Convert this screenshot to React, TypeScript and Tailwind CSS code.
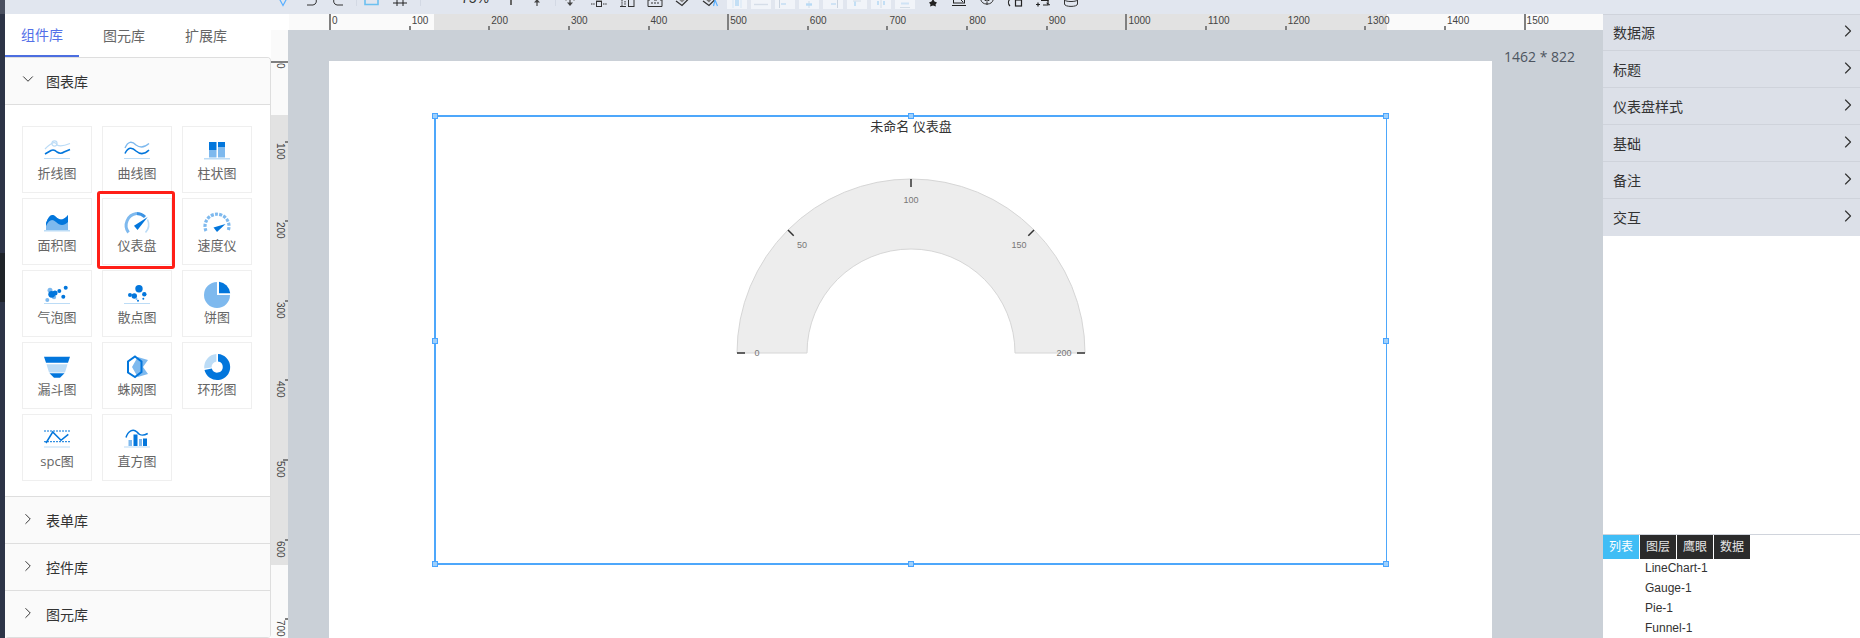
import type { ReactNode } from "react";
import { ChevronDown, ChevronRight } from "lucide-react";

const D = "#0276dc";
const L = "#7eb9ee";
const P = "#bcdcf6";

function Base() {
  return <rect x="2" y="25" width="26" height="1" fill={P} />;
}

function Ico({ children }: { children: ReactNode }) {
  return (
    <svg width="30" height="28" viewBox="0 0 30 28" fill="none" className="overflow-visible shrink-0">
      {children}
    </svg>
  );
}

const charts: { name: string; icon: ReactNode }[] = [
  {
    name: "折线图",
    icon: (
      <Ico>
        <path d="M3 16 C5 14 7 12 9 11 C11 9 14 9 15 12 C18 14 22 13 28 10.5" stroke={P} strokeWidth="1.3" />
        <circle cx="12.5" cy="10.5" r="2.6" stroke={P} strokeWidth="1.1" />
        <path d="M3 21 L9 17.5 C11 16.5 13 17 15 19 C18 21 20 20.5 22 19 L28 16.5" stroke={D} strokeWidth="1.6" />
        <Base />
      </Ico>
    ),
  },
  {
    name: "曲线图",
    icon: (
      <Ico>
        <path d="M3 15 C6 8 10 8 14 12 C18 15 22 15 27 10.5" stroke={L} strokeWidth="1.4" />
        <path d="M3 20.5 C6 14 10 14 14 18 C18 21.5 22 22 27 17" stroke={D} strokeWidth="1.6" />
        <Base />
      </Ico>
    ),
  },
  {
    name: "柱状图",
    icon: (
      <Ico>
        <rect x="7" y="9" width="7.5" height="8" fill={D} />
        <rect x="7" y="17" width="7.5" height="7.5" fill={L} />
        <rect x="16" y="9" width="7" height="5" fill={D} />
        <rect x="16" y="14" width="7" height="10.5" fill={L} />
        <rect x="2" y="25" width="26" height="1.5" fill={P} />
      </Ico>
    ),
  },
  {
    name: "面积图",
    icon: (
      <Ico>
        <path d="M4 18 C7 10 10 8 14 12 C18 16 22 15 26 10 V25 H4 Z" fill={L} />
        <path d="M4 18 C7 10 10 8 14 12 C18 16 22 15 26 10 V17 C22 21 18 21 14 17 C10 13 7 15 4 21 Z" fill={D} />
        <rect x="2" y="25" width="26" height="1.5" fill={P} />
      </Ico>
    ),
  },
  {
    name: "仪表盘",
    icon: (
      <Ico>
        <path d="M6.5 27.5 A12 12 0 0 1 14.5 8.5" stroke={L} strokeWidth="3" />
        <path d="M14.5 8.5 A12 12 0 0 1 23 12" stroke="#3d94e4" strokeWidth="3" />
        <path d="M25.5 14.5 A12 12 0 0 1 23.5 27.5" stroke={P} strokeWidth="1.6" />
        <path d="M12 20.8 L25.7 12 L15.5 25 Z" fill={D} />
      </Ico>
    ),
  },
  {
    name: "速度仪",
    icon: (
      <Ico>
        <path d="M4 26 A12 12 0 1 1 26 26" stroke={L} strokeWidth="3.2" strokeDasharray="3 1.3" />
        <path d="M11.5 22.5 L23.5 19 L15 27 Z" fill={D} />
      </Ico>
    ),
  },
  {
    name: "气泡图",
    icon: (
      <Ico>
        <circle cx="8" cy="13.3" r="2.5" fill={L} />
        <circle cx="5.3" cy="23" r="2" fill={L} />
        <circle cx="12" cy="20" r="2.2" fill={L} />
        <circle cx="9.7" cy="17.3" r="3.4" fill={D} />
        <circle cx="13" cy="16" r="2.5" fill={D} />
        <circle cx="17.3" cy="14" r="2" fill={D} />
        <circle cx="23.7" cy="10.7" r="2" fill={D} />
        <circle cx="21.3" cy="19.7" r="2" fill={D} />
        <rect x="2" y="26" width="26" height="1" fill={P} />
      </Ico>
    ),
  },
  {
    name: "散点图",
    icon: (
      <Ico>
        <circle cx="17" cy="11.7" r="3.7" fill={D} />
        <circle cx="8" cy="18" r="2" fill={D} />
        <circle cx="12.3" cy="19" r="2.7" fill={D} />
        <circle cx="22.3" cy="17.3" r="2.2" fill={D} />
        <circle cx="16" cy="23.8" r="1" fill={D} />
        <circle cx="21.3" cy="21.7" r="1" fill={D} />
        <circle cx="14.5" cy="22" r="1" fill={L} />
        <rect x="2" y="26" width="26" height="1" fill={P} />
      </Ico>
    ),
  },
  {
    name: "饼图",
    icon: (
      <Ico>
        <path d="M15 5 V18 H28 A13 13 0 1 1 15 5 Z" fill={L} />
        <path d="M17 4.7 A13 13 0 0 1 28.2 16.3 H17 Z" fill={D} />
      </Ico>
    ),
  },
  {
    name: "漏斗图",
    icon: (
      <Ico>
        <path d="M2 7.7 H28 L26 13.7 H4 Z" fill={D} />
        <path d="M4.5 15.3 H25.5 L23 23.5 H7 Z" fill={P} />
        <path d="M7.5 24.3 H22.5 L18 28.7 H12 Z" fill={D} />
      </Ico>
    ),
  },
  {
    name: "蛛网图",
    icon: (
      <Ico>
        <path d="M15.7 8 L26 11 L21 18 L26 25 L15.7 28 L10 18 Z" fill={L} />
        <path d="M13 7.5 L19.5 12.5 V23 L13 28 L6 23.5 V12.5 Z" stroke={D} strokeWidth="2" />
      </Ico>
    ),
  },
  {
    name: "环形图",
    icon: (
      <Ico>
        <path d="M16 5.1 A13 13 0 1 1 2.5 21 L9.8 19.6 A5.6 5.6 0 1 0 16 12.5 Z" fill={D} />
        <path d="M14.4 5.1 V12.6 A5.6 5.6 0 0 0 9.6 18.4 L2.3 19.6 A13 13 0 0 1 14.4 5.1 Z" fill={P} />
      </Ico>
    ),
  },
  {
    name: "spc图",
    icon: (
      <Ico>
        <path d="M2 10 H28" stroke={D} strokeWidth="1" strokeDasharray="2 1" />
        <path d="M2 20.7 H28" stroke={D} strokeWidth="1" strokeDasharray="2 1" />
        <path d="M4 22 L10.7 11 L19 19.3 L26.3 13.3" stroke={D} strokeWidth="1.5" />
        <rect x="2" y="25.5" width="26" height="1" fill={P} />
      </Ico>
    ),
  },
  {
    name: "直方图",
    icon: (
      <Ico>
        <rect x="6.5" y="19" width="3.5" height="6" fill={L} />
        <rect x="11.5" y="13.5" width="4" height="11.5" fill={D} />
        <rect x="17" y="18" width="3" height="7" fill={L} />
        <rect x="21" y="17.5" width="4" height="7.5" fill={D} />
        <path d="M4 16.5 C6 10 11 7 15 11 C18 15 21 15 25.7 12.5" stroke={D} strokeWidth="1.5" />
        <rect x="2" y="25.5" width="26" height="1" fill={P} />
      </Ico>
    ),
  },
];

const topLabels = [0, 100, 200, 300, 400, 500, 600, 700, 800, 900, 1000, 1100, 1200, 1300, 1400, 1500];
const sideLabels = [0, 100, 200, 300, 400, 500, 600, 700];

function Tool({ className, children }: { className: string; children: ReactNode }) {
  return (
    <svg width="16" height="18" viewBox="0 0 16 18" fill="none" className={"shrink-0 -mt-[10px] " + className}>
      {children}
    </svg>
  );
}

function Sep({ className }: { className: string }) {
  return <div className={"w-px h-[6px] shrink-0 bg-[#d3d9e4] " + className} />;
}

function AlignBox({ children, className = "" }: { children: ReactNode; className?: string }) {
  return (
    <svg width="20" height="9" viewBox="0 0 20 9" fill="none" className={"shrink-0 bg-[#f1f4f9] " + className}>
      {children}
    </svg>
  );
}

function Toolbar() {
  return (
    <div className="h-[14px] bg-[#e1e6ef] flex items-start overflow-hidden shrink-0">
      <Tool className="ml-[270px]">
        <path d="M4.5 9 L8 15.5 L11.5 9" stroke="#5ab0ff" strokeWidth="1.2" />
      </Tool>
      <Tool className="ml-[13px]">
        <path d="M3 15 H9 A4 4 0 0 0 11 8" stroke="#333" strokeWidth="1" />
      </Tool>
      <Tool className="ml-[10px]">
        <path d="M13 15 H7 A4 4 0 0 1 5 8" stroke="#333" strokeWidth="1" />
      </Tool>
      <Sep className="ml-[10px]" />
      <Tool className="ml-[7px]">
        <path d="M1 9 V14.5 H14 V9" stroke="#6bc0f0" strokeWidth="1.6" />
      </Tool>
      <Tool className="ml-[12px]">
        <path d="M5 8 V16 M11 8 V16 M1 13 H15" stroke="#222" strokeWidth="1" />
      </Tool>
      <Sep className="ml-[12px]" />
      <div className="ml-[40px] w-[25px] -mt-[9px] h-[14px] text-[14px] leading-[14px] text-[#333] font-['Liberation_Sans',sans-serif] whitespace-nowrap">
        75%
      </div>
      <div className="ml-[24px] w-[2px] h-[5px] bg-[#666] shrink-0" />
      <Tool className="ml-[17px]">
        <path d="M8 9 V16" stroke="#444" strokeWidth="1.2" />
        <path d="M5 12.5 L8 9 L11 12.5 Z" fill="#444" />
      </Tool>
      <Sep className="ml-[10px]" />
      <Tool className="ml-[6px]">
        <path d="M8 8 V15" stroke="#444" strokeWidth="1.2" />
        <path d="M5 12.5 L8 16 L11 12.5 Z" fill="#444" />
        <path d="M3 10 H5 M11 10 H13" stroke="#888" />
      </Tool>
      <Tool className="ml-[13px]">
        <rect x="5.5" y="11.5" width="5" height="5" stroke="#333" />
        <path d="M0 14 H4 M12 14 H16" stroke="#333" strokeDasharray="1.5 0.7" />
        <path d="M5 10 H11" stroke="#555" />
      </Tool>
      <Tool className="ml-[12px]">
        <rect x="9.5" y="9.5" width="5.5" height="7" stroke="#333" />
        <path d="M3 10 V16 M6 11 V15" stroke="#333" strokeDasharray="1.5 0.7" />
        <path d="M1 16.5 H7" stroke="#333" />
      </Tool>
      <Tool className="ml-[12px]">
        <path d="M1 10 V16.5 H15 V10 M1 10 H3 M13 10 H15" stroke="#333" />
        <path d="M4 13 H12" stroke="#333" strokeDasharray="2 1" />
        <path d="M7 10 H10" stroke="#333" />
      </Tool>
      <Tool className="ml-[11px]">
        <path d="M2 11 L8 15.5 L14 9.5" stroke="#333" strokeWidth="1.3" />
        <path d="M3 8 L8 12.5 L13 8 Z" fill="#888" />
      </Tool>
      <Tool className="ml-[12px]">
        <path d="M1 11 L7 15.5 L13 9.5" stroke="#333" strokeWidth="1.3" />
        <path d="M2 8 L7 12.5 L11 8 Z" fill="#777" />
        <path d="M11.5 16 L13 10 L15.5 16" stroke="#5ab0ff" strokeWidth="1.2" />
      </Tool>
      <div className="ml-[9px] flex gap-[4px] shrink-0">
        <AlignBox>
          <path d="M6 0 V8 M14 0 V8" stroke="#d5e6f5" />
          <rect x="8" y="0" width="4" height="6" fill="#c3dff5" />
        </AlignBox>
        <AlignBox>
          <path d="M3 4.5 H17" stroke="#d5dde8" strokeWidth="1.4" />
        </AlignBox>
        <AlignBox>
          <path d="M4.5 0 V8" stroke="#c9d3df" />
          <path d="M6 4 H11" stroke="#cfe3f5" strokeWidth="2" />
        </AlignBox>
        <AlignBox>
          <path d="M10 1 V8" stroke="#cfdbe6" />
          <path d="M7 4.5 H13" stroke="#b8daf5" strokeWidth="2.4" />
        </AlignBox>
        <AlignBox>
          <path d="M14.5 0 V8" stroke="#c9d3df" />
          <path d="M8 4 H13" stroke="#cfe3f5" strokeWidth="2" />
        </AlignBox>
        <AlignBox>
          <path d="M6 1 H14" stroke="#d2dce6" />
          <path d="M8 1.5 V6" stroke="#c3dff5" strokeWidth="2" />
        </AlignBox>
        <AlignBox>
          <path d="M10 0 V8" stroke="#d2dce6" />
          <path d="M7 1 V5 M13 1 V5" stroke="#c3dff5" strokeWidth="2" />
        </AlignBox>
        <AlignBox>
          <path d="M5 7.5 H15" stroke="#d2dce6" />
          <path d="M6 3.5 H14" stroke="#cfe3f5" strokeWidth="2" />
        </AlignBox>
      </div>
      <Tool className="ml-[10px]">
        <path d="M8 9 L9.5 11.5 L12 12.5 L10.5 14.5 L11 16.5 L8 15.5 L5 16.5 L5.5 14.5 L4 12.5 L6.5 11.5 Z" fill="#222" />
      </Tool>
      <Tool className="ml-[10px]">
        <rect x="2.5" y="8" width="11" height="5" stroke="#222" />
        <path d="M1 15.5 H15" stroke="#222" />
        <path d="M10 10 L12 12" stroke="#222" />
      </Tool>
      <Tool className="ml-[12px]">
        <path d="M1.5 9 A6.7 6.7 0 0 0 14.5 9" stroke="#333" />
        <path d="M5 8 A3 3 0 0 0 11 8" stroke="#333" />
        <path d="M8 12 V15" stroke="#333" />
      </Tool>
      <Tool className="ml-[12px]">
        <path d="M3 9 C1 11 1 14 3 16" stroke="#222" strokeWidth="1.2" />
        <rect x="8.5" y="10" width="6" height="6" stroke="#222" strokeWidth="1.2" />
      </Tool>
      <Tool className="ml-[12px]">
        <path d="M1 14.5 H5 M3 12.5 V16.5" stroke="#222" strokeWidth="1.2" />
        <path d="M6 10.5 H13 V15 H8" stroke="#222" strokeWidth="1.2" />
        <path d="M11 9 L13.5 10.5 M11.5 13 L15 15" stroke="#222" />
      </Tool>
      <Tool className="ml-[12px]">
        <path d="M1.5 9 V14 C1.5 17.2 14.5 17.2 14.5 14 V9" stroke="#333" />
        <path d="M1.5 10 C3 12 13 12 14.5 10" stroke="#333" />
      </Tool>
    </div>
  );
}

function Header({ title, open = false }: { title: string; open?: boolean }) {
  return (
    <div className="h-[47px] bg-[#fafafa] border-b border-[#dedede] flex items-center pl-[14px] text-[14px] text-[#333] shrink-0">
      {open ? (
        <ChevronDown size={18} strokeWidth={1.3} className="text-[#333] -mt-[4px]" />
      ) : (
        <ChevronRight size={18} strokeWidth={1.3} className="text-[#333] -mt-[2px]" />
      )}
      <span className="ml-[9px]">{title}</span>
    </div>
  );
}

function LeftPanel() {
  return (
    <div className="w-[266px] shrink-0 flex flex-col bg-white font-['Open_Sans','Noto_Sans_CJK_SC',sans-serif]">
      <div className="h-[43px] flex shrink-0 text-[14px] text-[#666]">
        <div className="w-[74px] flex items-center justify-center border-b-2 border-[#4c6ee0] text-[#5470e8]">组件库</div>
        <div className="ml-[8px] w-[74px] flex items-center justify-center">图元库</div>
        <div className="ml-[8px] w-[74px] flex items-center justify-center">扩展库</div>
      </div>
      <div className="relative flex-1 border-r border-t border-[#dedede] rounded-tr-[4px] rounded-b-[4px] overflow-hidden">
        <Header title="图表库" open />
        <div className="pl-[17px] pt-[21px] h-[392px] border-b border-[#dedede]">
          <div className="grid grid-cols-[70px_70px_70px] gap-x-[10px] gap-y-[5px]">
            {charts.map((c) => (
              <div
                key={c.name}
                className="h-[67px] border border-[#efefef] flex flex-col items-center pt-[6px] text-[13px] leading-[18px] text-[#666]"
              >
                {c.icon}
                <span className="mt-[3px]">{c.name}</span>
              </div>
            ))}
          </div>
        </div>
        <Header title="表单库" />
        <Header title="控件库" />
        <Header title="图元库" />
        <div className="absolute left-[92px] top-[133px] w-[78px] h-[78px] border-[3px] border-[#ff1f17] rounded-[3px]" />
      </div>
    </div>
  );
}

function Ruler() {
  return (
    <div className="h-[16px] flex shrink-0 font-['Liberation_Sans',sans-serif]">
      <div className="w-[18px] bg-white shrink-0" />
      <div className="flex-1 flex pl-[40px] overflow-hidden bg-[linear-gradient(90deg,#fafafa_145px,#e2e2e2_145px,#e2e2e2_1098px,#fafafa_1098px)]">
        {topLabels.map((n) => (
          <div key={n} className="relative w-[79.65px] shrink-0 h-full">
            {n % 500 === 0 ? (
              <div className="absolute left-0 bottom-0 w-[2px] h-[16px] bg-[#808080]" />
            ) : (
              <div className="absolute left-0 bottom-0 w-[2px] h-[4px] bg-[#808080]" />
            )}
            <span className="absolute left-[3px] top-[1px] text-[10px] leading-[12px] text-[#444]">{n}</span>
          </div>
        ))}
        <div className="relative flex-1 h-full">
          <div className="absolute left-0 bottom-0 w-[2px] h-[4px] bg-[#808080]" />
        </div>
      </div>
    </div>
  );
}

function SideRuler() {
  return (
    <div className="w-[17px] shrink-0 pt-[31px] overflow-hidden font-['Liberation_Sans',sans-serif] bg-[linear-gradient(180deg,#fafafa_85px,#e2e2e2_85px,#e2e2e2_535px,#fafafa_535px)]">
      {sideLabels.map((n) => (
        <div key={n} className="relative h-[79.6px]">
          {n === 0 ? (
            <div className="absolute left-0 right-0 top-0 h-[2px] bg-[#808080]" />
          ) : n === 500 ? (
            <div className="absolute right-0 top-0 w-[5px] h-[2px] bg-[#808080]" />
          ) : (
            <div className="absolute right-0 top-0 w-[3px] h-[2px] bg-[#808080]" />
          )}
          <span className="absolute left-[3px] top-[2px] text-[10px] leading-[12px] text-[#444] [writing-mode:vertical-rl]">
            {n}
          </span>
        </div>
      ))}
    </div>
  );
}

function Gauge() {
  const label = "Liberation Sans";
  return (
    <svg width="360" height="195" viewBox="0 0 360 195" className="mt-[37px] shrink-0">
      <path
        d="M6 180 A174 174 0 0 1 354 180 H284 A104 104 0 0 0 76 180 Z"
        fill="#ededed"
        stroke="#d6d6d6"
        strokeWidth="1"
      />
      <g stroke="#333" strokeWidth="1.5">
        <path d="M6 180 H14" />
        <path d="M57 57 L62.7 62.7" />
        <path d="M180 6 V14" />
        <path d="M303 57 L297.3 62.7" />
        <path d="M354 180 H346" />
      </g>
      <g fill="#777" fontSize="9" fontFamily={label} textAnchor="middle">
        <text x="26" y="183">0</text>
        <text x="71" y="75">50</text>
        <text x="180" y="30">100</text>
        <text x="288" y="75">150</text>
        <text x="333" y="183">200</text>
      </g>
    </svg>
  );
}

function Handle({ className }: { className: string }) {
  return <div className={"absolute w-[6px] h-[6px] bg-[#9fd0fb] border border-[#4aa5ff] " + className} />;
}

function Canvas() {
  return (
    <div className="flex-1 min-h-0 bg-[#cad0d7] relative overflow-hidden pl-[41px] pt-[31px]">
      <div className="absolute left-[1216px] top-[18px] text-[14px] leading-[18px] text-[#4d5560] font-['Open_Sans',sans-serif]">
        1462 * 822
      </div>
      <div className="w-[1163px] h-[800px] bg-white relative">
        <div className="absolute left-[105px] top-[54px] w-[953px] h-[450px] border-2 border-r border-[#4da7fb] flex flex-col items-center">
          <div className="text-[13px] leading-[18px] text-[#333] pt-px font-['Liberation_Sans','Noto_Sans_CJK_SC',sans-serif]">
            未命名 仪表盘
          </div>
          <Gauge />
          <Handle className="-left-[4px] -top-[4px]" />
          <Handle className="left-[472px] -top-[4px]" />
          <Handle className="-right-[3px] -top-[4px]" />
          <Handle className="-left-[4px] top-[221px]" />
          <Handle className="-right-[3px] top-[221px]" />
          <Handle className="-left-[4px] -bottom-[4px]" />
          <Handle className="left-[472px] -bottom-[4px]" />
          <Handle className="-right-[3px] -bottom-[4px]" />
        </div>
      </div>
    </div>
  );
}

const props = ["数据源", "标题", "仪表盘样式", "基础", "备注", "交互"];

function RightPanel() {
  return (
    <div className="w-[257px] shrink-0 flex flex-col bg-white font-['Open_Sans','Noto_Sans_CJK_SC',sans-serif]">
      <div className="bg-[#dce0e8] border-t border-[#cfd3db] -mb-px">
        {props.map((p, i) => (
          <div
            key={p}
            className={
              "flex items-center justify-between pl-[10px] pr-[2px] text-[14px] text-[#333] " +
              (i === 0 ? "h-[36px] " : "h-[37px] ") +
              (i < props.length - 1 ? "border-b border-[#cfd3db]" : "")
            }
          >
            <span>{p}</span>
            <ChevronRight size={20} strokeWidth={1.4} className="text-[#333] -mt-[3px]" />
          </div>
        ))}
      </div>
      <div className="flex-1" />
      <div className="h-[104px] border-t border-[#d0d4dc] shrink-0">
        <div className="flex gap-px text-[12px] leading-[24px] text-center text-[#e6e6e6]">
          <div className="w-[36px] bg-[#40bdf5] text-white">列表</div>
          <div className="w-[36px] bg-[#2b2b2b]">图层</div>
          <div className="w-[36px] bg-[#2b2b2b]">鹰眼</div>
          <div className="w-[36px] bg-[#2b2b2b]">数据</div>
        </div>
        <div className="pl-[42px] -mt-px text-[12px] leading-[20px] text-[#333] font-['Liberation_Sans',sans-serif]">
          <div>LineChart-1</div>
          <div>Gauge-1</div>
          <div>Pie-1</div>
          <div>Funnel-1</div>
        </div>
      </div>
    </div>
  );
}

export default function App() {
  return (
    <div className="w-[1860px] h-[638px] overflow-hidden flex bg-white">
      <div className="w-[5px] shrink-0 flex flex-col bg-[#2d3447]">
        <div className="h-[14px] bg-[#4a5060]" />
        <div className="h-[239px]" />
        <div className="h-[49px] bg-[#1f2329]" />
      </div>
      <div className="flex-1 min-w-0 flex flex-col">
        <Toolbar />
        <div className="flex-1 min-h-0 flex">
          <LeftPanel />
          <div className="w-[1332px] shrink-0 flex flex-col min-h-0">
            <Ruler />
            <div className="flex-1 min-h-0 flex">
              <SideRuler />
              <Canvas />
            </div>
          </div>
          <RightPanel />
        </div>
      </div>
    </div>
  );
}
